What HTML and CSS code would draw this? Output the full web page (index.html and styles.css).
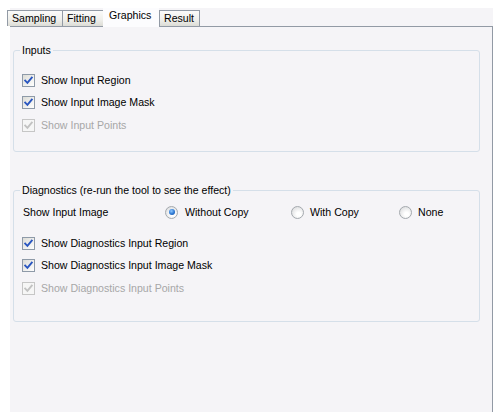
FILE: index.html
```html
<!DOCTYPE html>
<html>
<head>
<meta charset="utf-8">
<link rel="stylesheet" href="styles.css">
</head>
<body>
<div class="window">
  <div class="tabs">
    <div class="tab">Sampling</div>
    <div class="tab">Fitting</div>
    <div class="tab tab-active">Graphics</div>
    <div class="tab">Result</div>
  </div>
  <div class="panel">
    <fieldset class="group group-inputs">
      <legend>Inputs</legend>
      <div class="row"><span class="check"><svg viewBox="0 0 13 13" width="13" height="13"><path d="M3.2 6.6 L5.4 8.9 L9.8 3.6" /></svg></span><span class="lbl">Show Input Region</span></div>
      <div class="row"><span class="check"><svg viewBox="0 0 13 13" width="13" height="13"><path d="M3.2 6.6 L5.4 8.9 L9.8 3.6" /></svg></span><span class="lbl">Show Input Image Mask</span></div>
      <div class="row disabled"><span class="check"><svg viewBox="0 0 13 13" width="13" height="13"><path d="M3.2 6.6 L5.4 8.9 L9.8 3.6" /></svg></span><span class="lbl">Show Input Points</span></div>
    </fieldset>
    <fieldset class="group group-diag">
      <legend>Diagnostics (re-run the tool to see the effect)</legend>
      <div class="radio-row">
        <span class="radio-label">Show Input Image</span>
        <span class="opt opt-1"><span class="radio radio-on"></span><span class="lbl">Without Copy</span></span>
        <span class="opt opt-2"><span class="radio"></span><span class="lbl">With Copy</span></span>
        <span class="opt"><span class="radio"></span><span class="lbl">None</span></span>
      </div>
      <div class="checks">
        <div class="row"><span class="check"><svg viewBox="0 0 13 13" width="13" height="13"><path d="M3.2 6.6 L5.4 8.9 L9.8 3.6" /></svg></span><span class="lbl">Show Diagnostics Input Region</span></div>
        <div class="row"><span class="check"><svg viewBox="0 0 13 13" width="13" height="13"><path d="M3.2 6.6 L5.4 8.9 L9.8 3.6" /></svg></span><span class="lbl">Show Diagnostics Input Image Mask</span></div>
        <div class="row disabled"><span class="check"><svg viewBox="0 0 13 13" width="13" height="13"><path d="M3.2 6.6 L5.4 8.9 L9.8 3.6" /></svg></span><span class="lbl">Show Diagnostics Input Points</span></div>
      </div>
    </fieldset>
  </div>
</div>
</body>
</html>
```
FILE: styles.css
```css
html, body {
  margin: 0;
  padding: 0;
  background: #ffffff;
}
body {
  font-family: "Liberation Sans", Arial, sans-serif;
  font-size: 10.6px;
  color: #000;
}
.window {
  margin: 8px 0 0 10px;
  width: 483px;
  height: 404px;
  background: #f5f4f7;
  display: flex;
  flex-direction: column;
}
.tabs {
  display: flex;
  align-items: flex-end;
  height: 18px;
  margin-left: -3px;
  position: relative;
  z-index: 1;
}
.tab {
  box-sizing: border-box;
  height: 16px;
  line-height: 14px;
  padding: 0 4px;
  border: 1px solid #929aa5;
  border-bottom: none;
  border-right: none;
  background: linear-gradient(#fbfbfa, #eeeeea 60%, #dcdcd6);
  white-space: nowrap;
}
.tab:nth-child(1) { width: 55px; }
.tab:nth-child(2) { width: 41px; }
.tab-active {
  width: 56px;
  line-height: 14px;
  background: #fcfcfe;
  border: none;
  padding: 0 0 0 6px;
  margin-bottom: -1px;
  height: 19px;
}
.tab:nth-child(4) {
  width: 41px;
  border-right: 1px solid #929aa5;
}
.panel {
  flex: 1;
  border-top: 1px solid #929aa5;
  border-right: 1px solid #929aa5;
  padding: 0 0 0 3px;
}
.group {
  margin: 0;
  padding: 0;
  width: 467px;
  box-sizing: border-box;
  border: 1px solid #d5dfe9;
  border-radius: 3px;
  min-width: 0;
}
.group legend {
  margin-left: 6px;
  padding: 0 2px;
  line-height: 13px;
}
.group-inputs {
  margin-top: 17px;
  padding-top: 12px;
  padding-bottom: 15px;
}
.group-diag {
  margin-top: 32px;
  padding-top: 4px;
  padding-bottom: 22px;
}
.row {
  display: flex;
  align-items: center;
  height: 22px;
  padding-left: 8px;
}
.row + .row.disabled { margin-top: 1px; }
.check {
  box-sizing: border-box;
  width: 13px;
  height: 13px;
  border: 1px solid #8e9aa8;
  background: linear-gradient(135deg, #dcdcd7, #ffffff);
  margin-right: 6px;
  display: flex;
}
.check svg {
  margin: -1px;
}
.check path {
  fill: none;
  stroke: #2a56c0;
  stroke-width: 1.9;
  stroke-linecap: square;
}
.disabled .check {
  border-color: #c6c6c6;
  background: #f6f6f6;
}
.disabled .check path { stroke: #c2c2c2; }
.disabled .lbl { color: #a7a7a7; }
.radio-row {
  display: grid;
  grid-template-columns: 142px 126px 108px auto;
  align-items: center;
  height: 22px;
  padding-left: 9px;
}
.opt {
  display: flex;
  align-items: center;
}
.radio {
  box-sizing: border-box;
  width: 13px;
  height: 13px;
  border-radius: 50%;
  border: 1px solid #a4a9ae;
  background: radial-gradient(circle at 60% 65%, #ffffff 20%, #d9dadc 90%);
  margin-right: 7px;
  display: flex;
  align-items: center;
  justify-content: center;
}
.radio-on::after {
  content: "";
  width: 6px;
  height: 6px;
  border-radius: 50%;
  background: radial-gradient(circle at 40% 35%, #8fc8ff 0%, #2b76d2 55%, #174f9e 100%);
}
.opt-2 .radio, .opt:last-child .radio { margin-right: 6px; }
.checks {
  margin-top: 9px;
}
```
